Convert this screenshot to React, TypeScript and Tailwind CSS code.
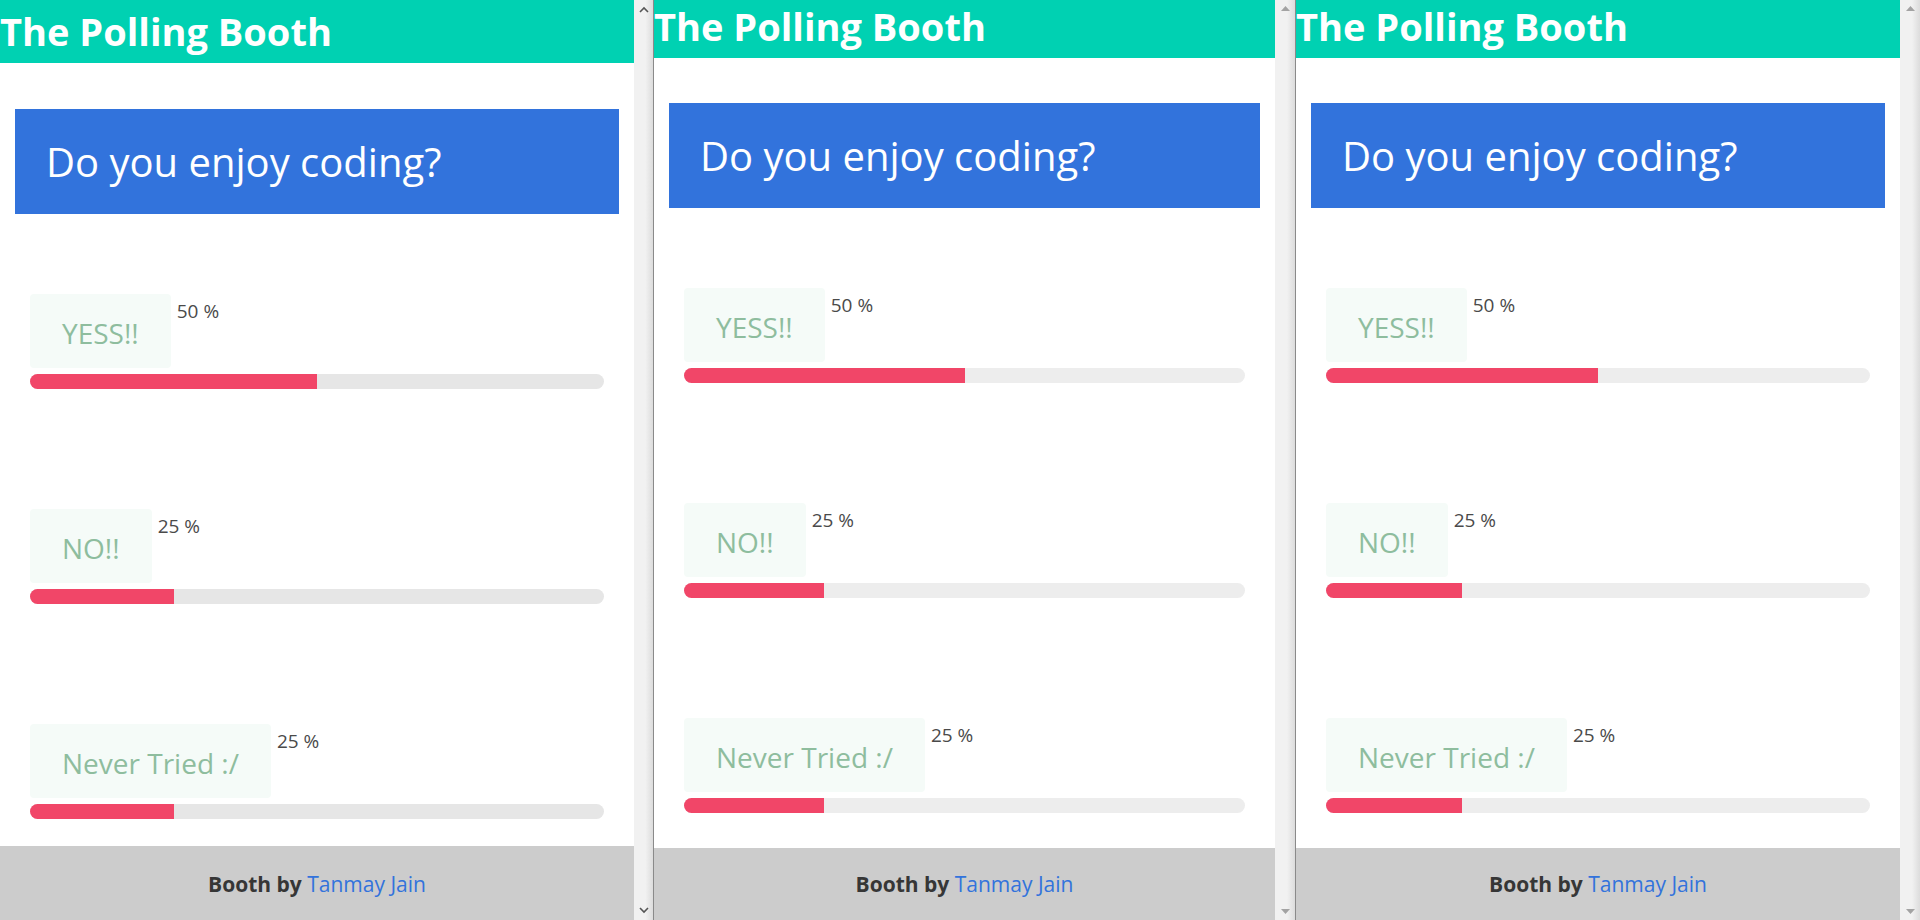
const options = [
  { label: "YESS!!", pct: 50 },
  { label: "NO!!", pct: 25 },
  { label: "Never Tried :/", pct: 25 },
]

type Pane = {
  width: string
  header: string
  question: string
  track: string
  footer: string
  bar: string
  chevron: boolean
  divider: boolean
}

const panes: Pane[] = [
  {
    width: "w-[634px]",
    header: "h-[63px] pt-[5px]",
    question: "mt-[46px]",
    track: "bg-[#e6e6e6]",
    footer: "mt-[27px] pt-[24px]",
    bar: "w-[19px]",
    chevron: true,
    divider: true,
  },
  {
    width: "w-[621px]",
    header: "h-[58px]",
    question: "mt-[45px]",
    track: "bg-[#ededed]",
    footer: "mt-[35px] pt-[22px]",
    bar: "w-[20px]",
    chevron: false,
    divider: true,
  },
  {
    width: "w-[604px]",
    header: "h-[58px]",
    question: "mt-[45px]",
    track: "bg-[#ededed]",
    footer: "mt-[35px] pt-[22px]",
    bar: "w-[20px]",
    chevron: false,
    divider: false,
  },
]

function Scrollbar({ width, chevron, divider }: { width: string; chevron: boolean; divider: boolean }) {
  return (
    <div className={`flex h-[920px] shrink-0 ${divider ? "border-r border-[#8a8a8a]" : ""}`}>
      <div
        className={`${width} flex flex-col items-center justify-between bg-linear-to-r from-[#f1f1f1] from-60% to-[#dcdcdc] py-[6px]`}
      >
        {chevron ? (
          <>
            <svg width="10" height="7" viewBox="0 0 10 7">
              <polyline points="1,6 5,2 9,6" fill="none" stroke="#555" strokeWidth="1.6" />
            </svg>
            <svg width="10" height="7" viewBox="0 0 10 7">
              <polyline points="1,1 5,5 9,1" fill="none" stroke="#555" strokeWidth="1.6" />
            </svg>
          </>
        ) : (
          <>
            <svg width="9" height="5" viewBox="0 0 9 5">
              <polygon points="0,5 4.5,0 9,5" fill="#a3a3a3" />
            </svg>
            <svg width="9" height="5" viewBox="0 0 9 5">
              <polygon points="0,0 4.5,5 9,0" fill="#a3a3a3" />
            </svg>
          </>
        )}
      </div>
    </div>
  )
}

function Booth({ pane }: { pane: Pane }) {
  return (
    <div className={`${pane.width} flex h-[920px] shrink-0 flex-col overflow-hidden bg-white`}>
      <header className={`${pane.header} shrink-0 bg-[#00d1b2]`}>
        <h1 className="text-[38px] leading-[52px] font-bold text-white">The Polling Booth</h1>
      </header>

      <div className={`${pane.question} mx-[15px] bg-[#3273dc] px-[31px] py-[26px]`}>
        <h2 className="text-[40px] leading-[53px] text-white">Do you enjoy coding?</h2>
      </div>

      <div className="px-[30px]">
        {options.map((opt, i) => (
          <div key={opt.label} className={i === 0 ? "mt-[80px]" : "mt-[120px]"}>
            <div className="flex items-start">
              <div className="rounded-[4px] bg-[#f5fbf8] px-[32px] pt-[20px] pb-[16px] text-[28px] leading-[38px] text-[#8ebd9e]">
                {opt.label}
              </div>
              <span className="mt-[4px] ml-[6px] text-[19px] leading-[26px] text-[#4a4a4a]">{opt.pct} %</span>
            </div>
            <div className={`mt-[6px] h-[15px] overflow-hidden rounded-full ${pane.track}`}>
              <div className="h-full bg-[#f14668]" style={{ width: `${opt.pct}%` }}></div>
            </div>
          </div>
        ))}
      </div>

      <footer className={`${pane.footer} flex-1 bg-[#cccccc] text-center text-[21px] leading-[28px]`}>
        <strong className="font-bold text-[#363636]">Booth by</strong>{" "}
        <a href="#" className="text-[#3273dc]">
          Tanmay Jain
        </a>
      </footer>
    </div>
  )
}

export default function App() {
  return (
    <div className="flex h-[920px] w-[1920px] overflow-hidden font-['Open_Sans',sans-serif]">
      {panes.map((pane, i) => (
        <div key={i} className="flex">
          <Booth pane={pane} />
          <Scrollbar width={pane.bar} chevron={pane.chevron} divider={pane.divider} />
        </div>
      ))}
    </div>
  )
}
